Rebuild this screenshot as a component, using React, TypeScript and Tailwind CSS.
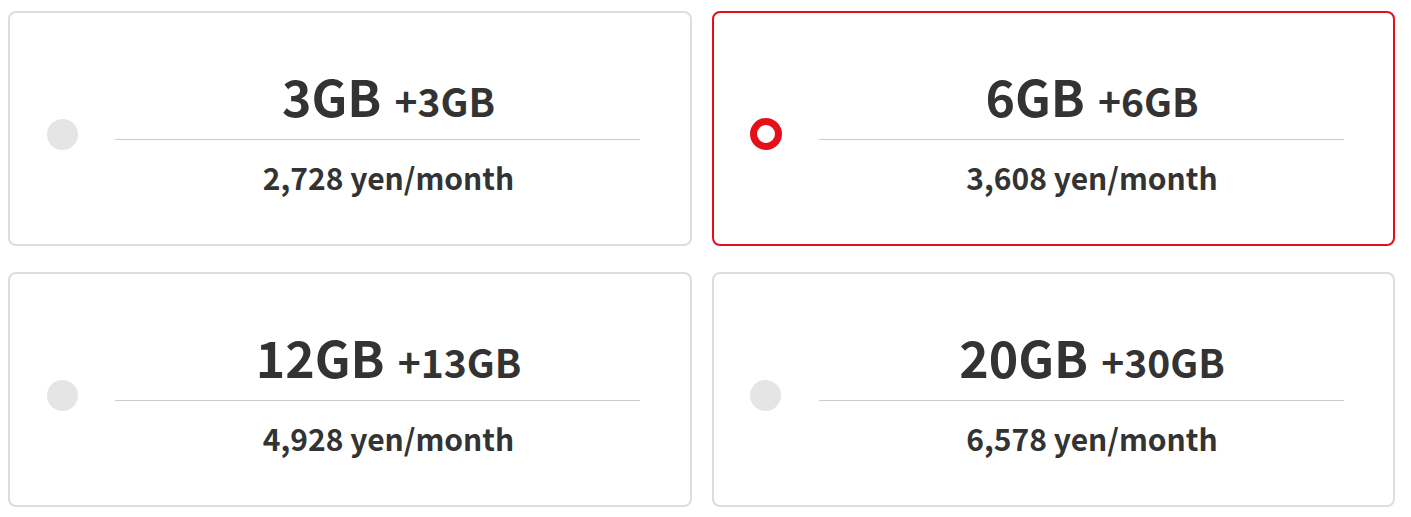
const plans = [
  { size: "3GB", bonus: "+3GB", price: "2,728 yen/month", selected: false },
  { size: "6GB", bonus: "+6GB", price: "3,608 yen/month", selected: true },
  { size: "12GB", bonus: "+13GB", price: "4,928 yen/month", selected: false },
  { size: "20GB", bonus: "+30GB", price: "6,578 yen/month", selected: false },
];

const App: React.FC = () => {
  return (
    <div
      className="w-[1411px] h-[517px] bg-white pl-[8px] pr-[16px] pt-[11px] grid grid-cols-2 gap-x-[20px] gap-y-[26px] content-start text-[#333]"
      style={{ fontFamily: '"Noto Sans CJK JP", "Source Sans Pro", sans-serif' }}
    >
      {plans.map((plan, idx) => (
        <div
          key={idx}
          className={`h-[235px] rounded-[8px] border-2 flex items-center ${
            plan.selected ? "border-[#e50f19]" : "border-[#dddddd]"
          }`}
        >
          {/* radio */}
          <div className="w-[105px] shrink-0 flex justify-center pr-[1px] pt-[11px]">
            {plan.selected ? (
              <div className="w-[32px] h-[32px] rounded-full border-[7px] border-[#e50f19] bg-white" />
            ) : (
              <div className="w-[31px] h-[31px] rounded-full bg-[#e5e5e5]" />
            )}
          </div>
          {/* plan info */}
          <div className="w-[525px] flex flex-col items-center pt-[4px]">
            <div className="pl-[22px] flex items-baseline font-bold leading-none">
              <span className="text-[50px]">{plan.size}</span>
              <span className="text-[39px] ml-[13px]">{plan.bonus}</span>
            </div>
            <div className="w-full h-[1px] bg-[#cccccc] mt-[19px]" />
            <div className="pl-[22px] mt-[22px] text-[30px] font-bold leading-none">{plan.price}</div>
          </div>
        </div>
      ))}
    </div>
  );
};

export default App;
